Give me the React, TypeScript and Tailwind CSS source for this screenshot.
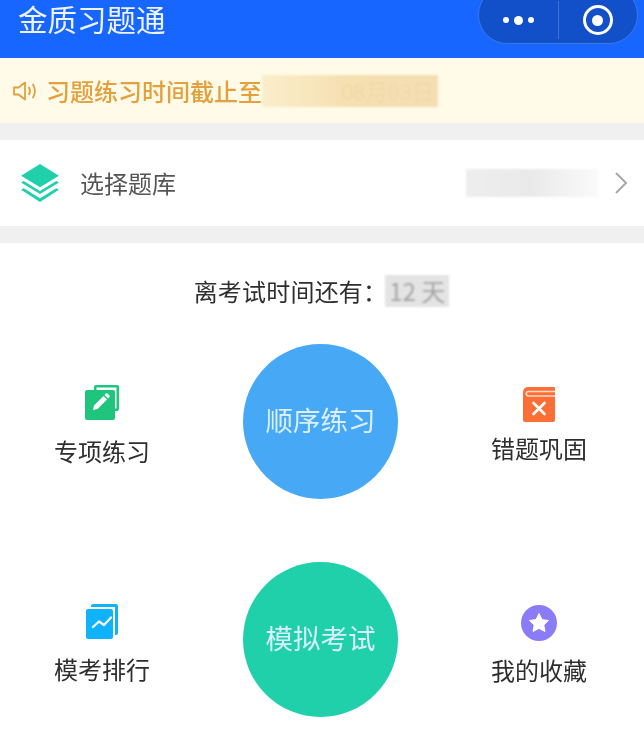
const font = { fontFamily: '"Noto Sans CJK SC", "Noto Sans", sans-serif' };

function Layers() {
  return (
    <svg width="40" height="40" viewBox="0 0 38 38" fill="#1fd0ab">
      <path d="M19 1 L37 12 L19 23 L1 12 Z" />
      <path d="M1 18.5 L3.5 17 L19 26.5 L34.5 17 L37 18.5 L19 29.5 Z" />
      <path d="M1 25.5 L3.5 24 L19 33.5 L34.5 24 L37 25.5 L19 37 Z" />
    </svg>
  );
}

function PencilIcon() {
  return (
    <svg width="36" height="36" viewBox="0 0 36 36">
      <path d="M10 2 a2 2 0 0 1 2 -2 H33 a2 2 0 0 1 2 2 V24 a2 2 0 0 1 -2 2 H31 V23.5 H32.5 V2.5 H12.5 V5 H10 Z" fill="#1fc47d" />
      <rect x="1" y="5" width="30" height="30" rx="2" fill="#1fc47d" />
      <path d="M9 25 L10 20.5 L19.5 11 L23 14.5 L13.5 24 Z" fill="#fff" />
      <path d="M20.5 10 L22 8.5 A1 1 0 0 1 23.5 8.5 L25.5 10.5 A1 1 0 0 1 25.5 12 L24 13.5 Z" fill="#fff" />
    </svg>
  );
}

function BookIcon() {
  return (
    <svg width="34" height="36" viewBox="0 0 34 36">
      <path d="M6 1 H32 a1 1 0 0 1 1 1 V34 a2 2 0 0 1 -2 2 H3 a2 2 0 0 1 -2 -2 V6 a5 5 0 0 1 5 -5 Z" fill="#fb6f37" />
      <path d="M33 5.5 H6.5 a2 2 0 0 0 0 4.5 H33" fill="none" stroke="#ffd9c8" strokeWidth="1.6" />
      <path d="M11.5 17 L22.5 28 M22.5 17 L11.5 28" stroke="#fff" strokeWidth="2.6" strokeLinecap="round" />
    </svg>
  );
}

function ChartIcon() {
  return (
    <svg width="34" height="37" viewBox="0 0 34 37">
      <path d="M6 3 a2 2 0 0 1 2 -2 H31 a2 2 0 0 1 2 2 V30 a2 2 0 0 1 -2 2 H30 V4 H6 Z" fill="#0fb2fb" />
      <rect x="1" y="6" width="27" height="30" rx="2" fill="#0fb2fb" />
      <path d="M8 24 L14 18.5 L19 22 L26 14.5" fill="none" stroke="#fff" strokeWidth="2.2" strokeLinecap="round" strokeLinejoin="round" />
    </svg>
  );
}

function StarIcon() {
  return (
    <svg width="36" height="36" viewBox="0 0 36 36">
      <circle cx="18" cy="18" r="18" fill="#8a7cf6" />
      <path d="M18 8.5 L21 14.6 L27.5 15.5 L22.8 20.1 L24 26.5 L18 23.4 L12 26.5 L13.2 20.1 L8.5 15.5 L15 14.6 Z" fill="#fff" stroke="#fff" strokeWidth="1" strokeLinejoin="round" />
    </svg>
  );
}

function Speaker() {
  return (
    <svg width="26" height="22" viewBox="0 0 26 22" fill="none" stroke="#e2a13c" strokeWidth="1.8" strokeLinejoin="round" strokeLinecap="round">
      <path d="M2 7.5 H6.5 L13 2.5 V19.5 L6.5 14.5 H2 Z" />
      <path d="M17 7.5 C18.2 9.5 18.2 12.5 17 14.5" />
      <path d="M21 4.5 C23.4 8.5 23.4 13.5 21 17.5" />
    </svg>
  );
}

function Feature({ icon, label, textOffset }: { icon: React.ReactNode; label: string; textOffset: string }) {
  return (
    <div className="flex w-24 flex-col items-center">
      <div className="flex h-9 items-center justify-center">{icon}</div>
      <span className={`whitespace-nowrap text-2xl leading-8 text-[#2e2e2e] ${textOffset}`}>{label}</span>
    </div>
  );
}

function Circle({ color, label }: { color: string; label: string }) {
  return (
    <div className={`flex h-[155px] w-[155px] shrink-0 items-center justify-center rounded-full pb-[3px] text-[27.5px] text-[#d9efff] ${color}`}>
      {label}
    </div>
  );
}

export default function App() {
  return (
    <div className="relative h-[736px] w-[644px] overflow-hidden bg-white blur-[0.6px]" style={font}>
      <header className="flex h-[58px] items-start bg-[#1766ff] pl-[18px] text-[29.5px] leading-[37px] text-[#eef4ff]">
        金质习题通
      </header>
      <div className="absolute right-[6px] top-[-14px] flex h-[58px] w-[160px] items-center rounded-full border border-[#3b78e6] bg-[#1150c8] pt-[10px]">
        <div className="flex flex-1 items-center justify-center gap-[5px]">
          <span className="h-[6px] w-[6px] rounded-full bg-white" />
          <span className="h-[9px] w-[9px] rounded-full bg-white" />
          <span className="h-[6px] w-[6px] rounded-full bg-white" />
        </div>
        <div className="h-[38px] w-px bg-[#3f74d6]" />
        <div className="flex flex-1 items-center justify-center">
          <div className="flex h-[30px] w-[30px] items-center justify-center rounded-full border-[3px] border-white">
            <span className="h-[11px] w-[11px] rounded-full bg-white" />
          </div>
        </div>
      </div>

      <div className="flex h-[65px] items-center bg-[#fffbe8] pl-3 text-2xl font-medium text-[#e2a13c]">
        <Speaker />
        <span className="ml-[8px]">习题练习时间截止至</span>
        <span className="flex h-[32px] w-[176px] items-center justify-end bg-gradient-to-r from-[#fbeecb] via-[#f6dfb0] to-[#f5deb3] pr-1 text-[22px] font-normal text-[#f0d9a8] blur-[1px]">
          08月03日
        </span>
      </div>

      <div className="mt-[17px] flex h-[86px] items-center bg-white pl-[20px] pr-4 shadow-[0_-17px_0_#f0f0f0,0_17px_0_#f0f0f0]">
        <Layers />
        <span className="ml-[20px] text-2xl text-[#555]">选择题库</span>
        <span className="ml-auto mr-[16px] h-[28px] w-[132px] bg-gradient-to-r from-[#eeeeee] via-[#eaeaea] to-[#fafafa] blur-[1px]" />
        <svg width="14" height="24" viewBox="0 0 14 24" fill="none" stroke="#a8a8a8" strokeWidth="2">
          <path d="M2 2 L12 12 L2 22" />
        </svg>
      </div>

      <div className="mt-[17px] flex h-[98px] items-center justify-center pb-[3px] pr-[1px] text-2xl text-[#2e2e2e]">
        <span className="tracking-[0.2px]">离考试时间还有：</span>
        <span className="-ml-[2px] bg-[#e4e4e4] px-[4px] text-[#a5a5a5] blur-[0.8px]">12 天</span>
      </div>

      <div className="mt-[3px] flex flex-col gap-[63px]">
        <div className="flex items-center gap-[93px] pl-[54px]">
          <div className="pt-[9px]">
            <Feature icon={<PencilIcon />} label="专项练习" textOffset="mt-[14px]" />
          </div>
          <Circle color="bg-[#47a9f6]" label="顺序练习" />
          <div className="pt-[7px]">
            <Feature icon={<BookIcon />} label="错题巩固" textOffset="mt-[10px]" />
          </div>
        </div>
        <div className="flex items-center gap-[93px] pl-[54px]">
          <div className="pt-[9px]">
            <Feature icon={<ChartIcon />} label="模考排行" textOffset="mt-[14px]" />
          </div>
          <Circle color="bg-[#1fd0ab]" label="模拟考试" />
          <div className="pt-[11px]">
            <Feature icon={<StarIcon />} label="我的收藏" textOffset="mt-[13px]" />
          </div>
        </div>
      </div>
    </div>
  );
}
